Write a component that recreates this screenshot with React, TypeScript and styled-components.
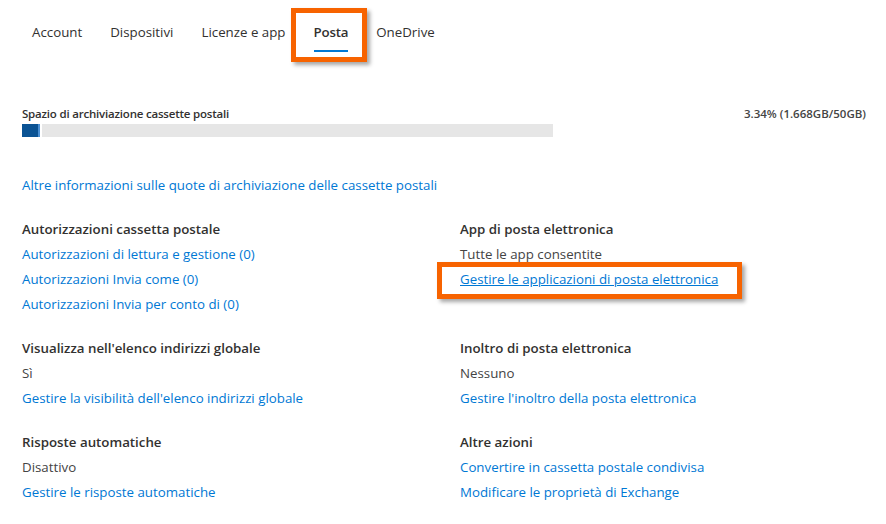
import styled, { createGlobalStyle } from 'styled-components';

const GlobalStyle = createGlobalStyle`
  body {
    margin: 0;
    background: #ffffff;
    font-family: 'Open Sans', 'Noto Sans', 'Liberation Sans', sans-serif;
    color: #323130;
  }
`;

interface Row {
  text: string;
  link?: boolean;
  highlight?: boolean;
}

interface Section {
  title: string;
  rows: Row[];
}

const tabs = ['Account', 'Dispositivi', 'Licenze e app', 'Posta', 'OneDrive'];
const activeTab = 'Posta';

const usedGB = 1.668;
const totalGB = 50;

const sections: Section[] = [
  {
    title: 'Autorizzazioni cassetta postale',
    rows: [
      { text: 'Autorizzazioni di lettura e gestione (0)', link: true },
      { text: 'Autorizzazioni Invia come (0)', link: true },
      { text: 'Autorizzazioni Invia per conto di (0)', link: true },
    ],
  },
  {
    title: 'App di posta elettronica',
    rows: [
      { text: 'Tutte le app consentite' },
      { text: 'Gestire le applicazioni di posta elettronica', link: true, highlight: true },
    ],
  },
  {
    title: "Visualizza nell'elenco indirizzi globale",
    rows: [
      { text: 'Sì' },
      { text: "Gestire la visibilità dell'elenco indirizzi globale", link: true },
    ],
  },
  {
    title: 'Inoltro di posta elettronica',
    rows: [
      { text: 'Nessuno' },
      { text: "Gestire l'inoltro della posta elettronica", link: true },
    ],
  },
  {
    title: 'Risposte automatiche',
    rows: [
      { text: 'Disattivo' },
      { text: 'Gestire le risposte automatiche', link: true },
    ],
  },
  {
    title: 'Altre azioni',
    rows: [
      { text: 'Convertire in cassetta postale condivisa', link: true },
      { text: 'Modificare le proprietà di Exchange', link: true },
    ],
  },
];

const App = () => {
  const percent = (usedGB / totalGB) * 100;

  return (
    <Page>
      <GlobalStyle />
      <TabBar>
        {tabs.map((tab) => (
          <Tab key={tab} $active={tab === activeTab}>
            <TabLabel $active={tab === activeTab}>{tab}</TabLabel>
          </Tab>
        ))}
      </TabBar>

      <StorageHeader>
        <StorageTitle>Spazio di archiviazione cassette postali</StorageTitle>
        <StorageValue>
          {percent.toFixed(2)}% ({usedGB}GB/{totalGB}GB)
        </StorageValue>
      </StorageHeader>
      <BarTrack>
        <BarFill style={{ width: `${percent}%` }} />
        <BarRest />
      </BarTrack>

      <InfoLink href="#">
        Altre informazioni sulle quote di archiviazione delle cassette postali
      </InfoLink>

      <SectionGrid>
        {sections.map((section) => (
          <SectionBlock key={section.title}>
            <SectionTitle>{section.title}</SectionTitle>
            {section.rows.map((row) =>
              row.link ? (
                <LineRow key={row.text}>
                  <RowLink href="#" $highlight={row.highlight}>
                    {row.text}
                  </RowLink>
                </LineRow>
              ) : (
                <LineRow key={row.text}>
                  <RowText>{row.text}</RowText>
                </LineRow>
              )
            )}
          </SectionBlock>
        ))}
      </SectionGrid>
    </Page>
  );
};

export default App;

const Page = styled.div`
  padding: 12px 20px 0 22px;
  font-size: 13.3px;
`;

const TabBar = styled.div`
  display: flex;
  margin-left: -4px;
  padding-top: 10px;
`;

const Tab = styled.div<{ $active: boolean }>`
  position: relative;
  padding: 0 14px;
  height: 30px;

  ${({ $active }) =>
    $active &&
    `
    &::after {
      content: '';
      position: absolute;
      top: -14px;
      bottom: -10px;
      left: -9px;
      right: -5px;
      border: 5px solid #f76300;
      box-shadow: 3px 3px 4px rgba(0, 0, 0, 0.35);
      pointer-events: none;
    }
  `}
`;

const TabLabel = styled.span<{ $active: boolean }>`
  display: inline-block;
  font-size: 13.3px;
  line-height: 20px;
  font-weight: ${({ $active }) => ($active ? 600 : 400)};
  letter-spacing: ${({ $active }) => ($active ? '-0.2px' : '0')};
  color: #323130;
  padding-bottom: 8px;
  border-bottom: 2px solid ${({ $active }) => ($active ? '#0078d4' : 'transparent')};
`;

const StorageHeader = styled.div`
  display: flex;
  justify-content: space-between;
  align-items: center;
  margin-top: 52px;
  height: 18px;
`;

const StorageTitle = styled.div`
  font-size: 11.5px;
  font-weight: 600;
  letter-spacing: -0.2px;
  color: #323130;
`;

const StorageValue = styled.div`
  font-size: 11.5px;
  font-weight: 600;
  color: #444444;
`;

const BarTrack = styled.div`
  display: flex;
  width: 531px;
  height: 13px;
  margin-top: 2px;
`;

const BarFill = styled.div`
  background: #0b5394;
  border-right: 2px solid #4a8fd4;
  box-sizing: border-box;
`;

const BarRest = styled.div`
  flex: 1;
  margin-left: 2px;
  background: #e6e6e6;
`;

const InfoLink = styled.a`
  display: block;
  margin-top: 36px;
  line-height: 25px;
  color: #0078d4;
  text-decoration: none;
`;

const SectionGrid = styled.div`
  display: grid;
  grid-template-columns: 438px 1fr;
  row-gap: 19px;
  margin-top: 19px;
`;

const SectionBlock = styled.div`
  display: flex;
  flex-direction: column;
`;

const SectionTitle = styled.div`
  line-height: 25px;
  font-weight: 600;
  color: #323130;
`;

const LineRow = styled.div`
  line-height: 25px;
  height: 25px;
`;

const RowText = styled.span`
  color: #444444;
`;

const RowLink = styled.a<{ $highlight?: boolean }>`
  position: relative;
  display: inline-block;
  color: #0078d4;
  text-decoration: ${({ $highlight }) => ($highlight ? 'underline' : 'none')};

  ${({ $highlight }) =>
    $highlight &&
    `
    &::after {
      content: '';
      position: absolute;
      top: -5px;
      bottom: -7px;
      left: -23px;
      right: -24px;
      border: 5px solid #f76300;
      box-shadow: 3px 3px 4px rgba(0, 0, 0, 0.35);
      pointer-events: none;
    }
  `}
`;
